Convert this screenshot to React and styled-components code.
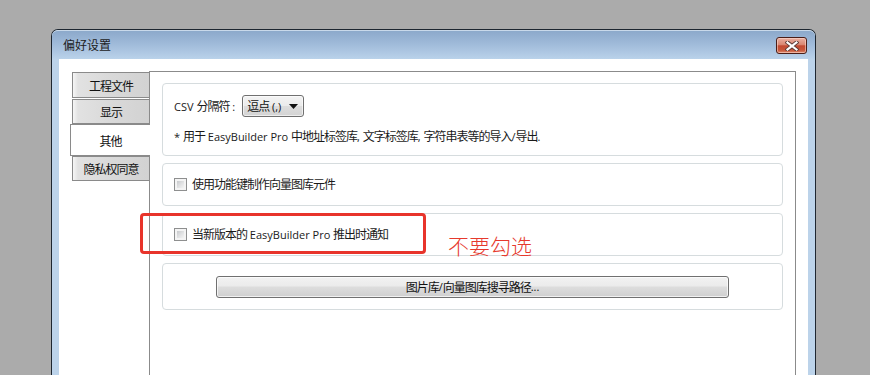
import React from "react";
import styled, { createGlobalStyle } from "styled-components";

const Global = createGlobalStyle`
  html, body { margin: 0; padding: 0; background: #ababab; overflow: hidden; }
  body { width: 870px; height: 375px; }
  * { box-sizing: border-box; }
`;

const Page = styled.div`
  width: 870px;
  height: 375px;
  padding: 29px 0 0 51px;
  overflow: hidden;
  font-family: "Open Sans", "Noto Sans CJK SC", sans-serif;
  font-size: 11px;
  color: #1a1a1a;
`;

const Window = styled.div`
  width: 765px;
  height: 380px;
  border: 1px solid #1d2630;
  border-bottom: none;
  border-radius: 7px 7px 0 0;
  background: #bcd3ea;
  display: flex;
  flex-direction: column;
`;

const TitleBar = styled.div`
  height: 29px;
  flex: none;
  display: flex;
  align-items: center;
  justify-content: space-between;
  padding: 0 8px 0 11px;
  border-radius: 6px 6px 0 0;
  background: linear-gradient(#8ca9cb 0%, #9fbad9 45%, #bad2ea 100%);
  border-top: 1px solid #c9d9ea;
`;

const Title = styled.span`
  font-family: "Noto Sans CJK SC", sans-serif;
  font-size: 12px;
  color: #1c1c1c;
  margin-top: -1px;
`;

const CloseButton = styled.div`
  width: 31px;
  height: 17px;
  margin-top: 1px;
  border: 1px solid #4a1e18;
  border-radius: 3px;
  background: linear-gradient(#eab0a2 0%, #d98671 45%, #c24a32 52%, #c65539 80%, #dd8a6d 100%);
  box-shadow: inset 0 0 0 1px rgba(255, 220, 210, 0.55);
  display: flex;
  align-items: center;
  justify-content: center;
`;

const Client = styled.div`
  flex: 1;
  margin: 0 7px;
  background: #ffffff;
  padding: 12px 12px 0 11px;
  display: flex;
  align-items: stretch;
`;

const TabColumn = styled.div`
  width: 80px;
  flex: none;
  margin-right: -1px;
  padding-top: 1px;
  display: flex;
  flex-direction: column;
  position: relative;
  z-index: 1;
`;

const Tab = styled.div`
  height: ${(p) => p.$h}px;
  margin-left: ${(p) => (p.$active ? 0 : 2)}px;
  margin-bottom: ${(p) => p.$gap || 0}px;
  display: flex;
  align-items: center;
  justify-content: center;
  font-family: "Noto Sans CJK SC", sans-serif;
  font-size: 12px;
  letter-spacing: -1px;
  color: #111;
  border: 1px solid #8a8a8a;
  border-right: ${(p) => (p.$active ? "none" : "1px solid #8a8a8a")};
  background: ${(p) =>
    p.$active
      ? "#ffffff"
      : "linear-gradient(to right, #f6f6f6 0px, #e2e2e2 5px, #d9d9d9 50%, #d2d2d2 100%)"};
  padding-right: ${(p) => (p.$active ? 0 : 0)}px;
`;

const Panel = styled.div`
  flex: 1;
  border: 1px solid #8b8b8b;
  border-bottom: none;
  padding: 11px 12px 0 12px;
  display: flex;
  flex-direction: column;
  gap: 7px;
`;

const Group = styled.div`
  position: relative;
  height: ${(p) => p.$h}px;
  border: 1px solid #d6dcde;
  border-radius: 4px;
  padding: 0 11px;
  display: flex;
  flex-direction: ${(p) => (p.$column ? "column" : "row")};
  align-items: ${(p) => (p.$column ? "flex-start" : "center")};
`;

const Row = styled.div`
  display: flex;
  align-items: center;
  gap: ${(p) => p.$gap || 0}px;
  margin-top: ${(p) => p.$mt || 0}px;
  white-space: nowrap;
`;

const Label = styled.span`
  font-size: 11px;
  line-height: 16px;
  color: #1a1a1a;
  white-space: nowrap;
`;

const Han = styled.span`
  font-family: "Noto Sans CJK SC", sans-serif;
  font-size: 12px;
  letter-spacing: -1px;
  line-height: 16px;
`;

const Select = styled.div`
  width: 62px;
  height: 22px;
  margin-left: 7px;
  border: 1px solid #707070;
  border-radius: 3px;
  background: linear-gradient(#f3f3f3 0%, #ebebeb 50%, #dddddd 51%, #d3d3d3 100%);
  box-shadow: inset 0 0 0 1px rgba(255, 255, 255, 0.6);
  display: flex;
  align-items: center;
  justify-content: space-between;
  padding: 0 5px 0 4px;
  font-size: 11px;
  color: #111;
`;

const Check = styled.div`
  width: 13px;
  height: 13px;
  flex: none;
  border: 1px solid #8e8f8f;
  background: #f4f4f4;
  padding: 2px;
  & > div {
    width: 100%;
    height: 100%;
    background: linear-gradient(135deg, #c8cacd 0%, #e2e3e4 55%, #f4f4f4 100%);
  }
`;

const WideButton = styled.div`
  flex: 1;
  height: 22px;
  margin: 0 42px;
  border: 1px solid #707070;
  border-radius: 3px;
  background: linear-gradient(#f2f2f2 0%, #ebebeb 45%, #dddddd 50%, #cfcfcf 100%);
  box-shadow: inset 0 0 0 1px rgba(255, 255, 255, 0.7);
  display: flex;
  align-items: center;
  justify-content: center;
  font-size: 11px;
  color: #111;
`;

const Annotation = styled.div`
  position: absolute;
  left: -23px;
  top: -1px;
  width: 286px;
  height: 41px;
  border: 3px solid #e8342b;
  border-radius: 4px;
  pointer-events: none;
`;

const AnnotationText = styled.div`
  position: absolute;
  left: 285px;
  top: 21px;
  font-family: "Noto Sans CJK SC", sans-serif;
  font-weight: 300;
  font-size: 21px;
  line-height: 21px;
  color: #e6392d;
  white-space: nowrap;
`;

const CJK = /([\u2E80-\u9FFF\uFF01-\uFF60]+)/;

function Text({ children }) {
  return String(children)
    .split(CJK)
    .filter(Boolean)
    .map((part, i) =>
      CJK.test(part) ? <Han key={i}>{part}</Han> : <React.Fragment key={i}>{part}</React.Fragment>
    );
}

const tabs = [
  { label: "工程文件", h: 26, gap: 1 },
  { label: "显示", h: 25 },
  { label: "其他", h: 32, active: true },
  { label: "隐私权同意", h: 25 },
];

function CloseIcon() {
  return (
    <svg width="14" height="10" viewBox="0 0 14 10">
      <path d="M2.5 1.5 L11.5 8.5 M11.5 1.5 L2.5 8.5" stroke="#5a3a36" strokeWidth="4" strokeLinecap="square" />
      <path d="M2.5 1.5 L11.5 8.5 M11.5 1.5 L2.5 8.5" stroke="#ffffff" strokeWidth="2.2" strokeLinecap="square" />
    </svg>
  );
}

function Arrow() {
  return (
    <svg width="9" height="5" viewBox="0 0 9 5">
      <path d="M0 0 H9 L4.5 5 Z" fill="#111" />
    </svg>
  );
}

export default function App() {
  return (
    <>
      <Global />
      <Page>
        <Window>
          <TitleBar>
            <Title>偏好设置</Title>
            <CloseButton>
              <CloseIcon />
            </CloseButton>
          </TitleBar>
          <Client>
            <TabColumn>
              {tabs.map((t) => (
                <Tab key={t.label} $h={t.h} $gap={t.gap} $active={t.active}>
                  {t.label}
                </Tab>
              ))}
            </TabColumn>
            <Panel>
              <Group $h={73} $column>
                <Row $mt={11}>
                  <Label><Text>CSV 分隔符 :</Text></Label>
                  <Select>
                    <span><Text>逗点 (,)</Text></span>
                    <Arrow />
                  </Select>
                </Row>
                <Row $mt={11}>
                  <Label><Text>* 用于 EasyBuilder Pro 中地址标签库, 文字标签库, 字符串表等的导入/导出.</Text></Label>
                </Row>
              </Group>
              <Group $h={43}>
                <Row $gap={5}>
                  <Check><div /></Check>
                  <Label><Text>使用功能键制作向量图库元件</Text></Label>
                </Row>
              </Group>
              <Group $h={43}>
                <Row $gap={5}>
                  <Check><div /></Check>
                  <Label><Text>当新版本的 EasyBuilder Pro 推出时通知</Text></Label>
                </Row>
                <Annotation />
                <AnnotationText>不要勾选</AnnotationText>
              </Group>
              <Group $h={47}>
                <WideButton><Text>图片库/向量图库搜寻路径...</Text></WideButton>
              </Group>
            </Panel>
          </Client>
        </Window>
      </Page>
    </>
  );
}
